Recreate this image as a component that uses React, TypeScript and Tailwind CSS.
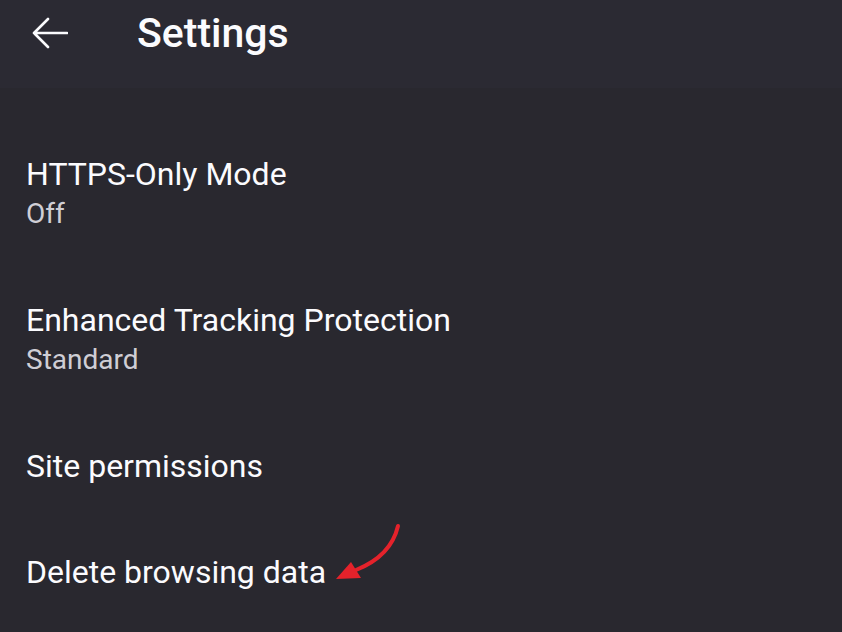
const rows = [
  { title: "HTTPS-Only Mode", summary: "Off" },
  { title: "Enhanced Tracking Protection", summary: "Standard" },
  { title: "Site permissions" },
  { title: "Delete browsing data" },
]

function BackArrow() {
  return (
    <svg width="36" height="32" viewBox="0 0 36 32" fill="none" stroke="#fbfbfe" strokeWidth={2.6} strokeLinecap="round" strokeLinejoin="round">
      <path d="M35 16H2M16 2L2 16l14 14" />
    </svg>
  )
}

export default function App() {
  return (
    <div className="relative h-[632px] w-[842px] overflow-hidden bg-[#29282f] font-['Roboto',sans-serif] text-[#fbfbfe]">
      <header className="flex h-[88px] items-start bg-[#2b2a33] pt-[9px]">
        <div className="flex h-[48px] items-center pl-[32px]">
          <BackArrow />
        </div>
        <h1 className="ml-[69px] text-[41px] font-medium leading-[48px]">Settings</h1>
      </header>

      <ul className="flex flex-col pt-[33px]">
        {rows.map((row) => (
          <li key={row.title} className="pl-[26px] pr-[25px] py-[33px]">
            <div className="text-[32px] leading-[40px]">{row.title}</div>
            {row.summary && (
              <div className="text-[28px] leading-[40px] text-[#cfced5]">{row.summary}</div>
            )}
          </li>
        ))}
      </ul>

      {/* red annotation arrow */}
      <svg className="absolute left-0 top-0" width="842" height="632" fill="none">
        <path d="M398 526Q391 556 356 570" stroke="#e4222b" strokeWidth={4} strokeLinecap="round" />
        <path d="M336 579L351 562L361 578Z" fill="#e4222b" />
      </svg>
    </div>
  )
}
